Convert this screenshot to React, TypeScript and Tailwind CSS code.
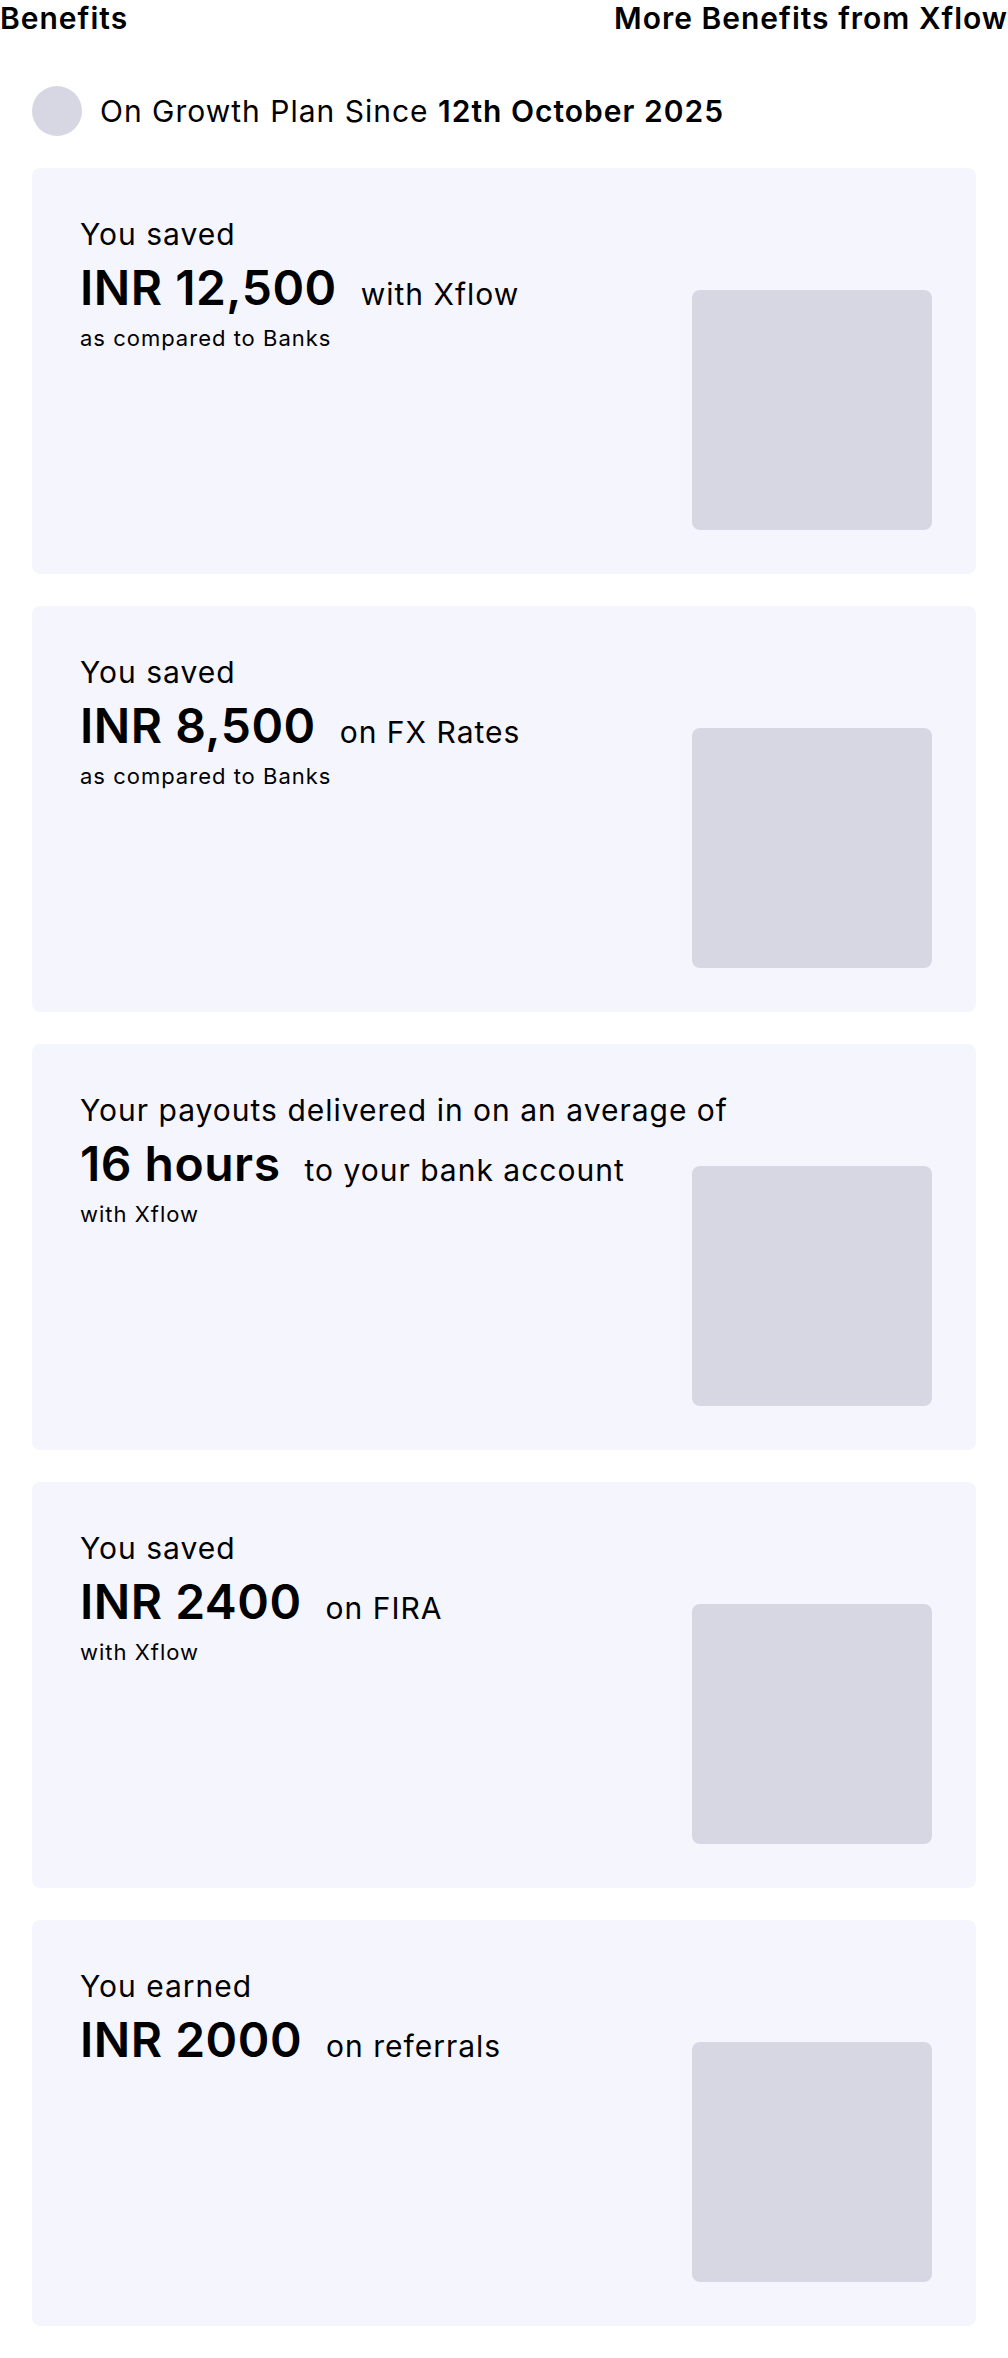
type Benefit = {
  lead: string;
  amount: string;
  suffix: string;
  note?: string;
};

const benefits: Benefit[] = [
  { lead: "You saved", amount: "INR 12,500", suffix: "with Xflow", note: "as compared to Banks" },
  { lead: "You saved", amount: "INR 8,500", suffix: "on FX Rates", note: "as compared to Banks" },
  {
    lead: "Your payouts delivered in on an average of",
    amount: "16 hours",
    suffix: "to your bank account",
    note: "with Xflow",
  },
  { lead: "You saved", amount: "INR 2400", suffix: "on FIRA", note: "with Xflow" },
  { lead: "You earned", amount: "INR 2000", suffix: "on referrals" },
];

function BenefitCard({ item }: { item: Benefit }) {
  return (
    <div className="grid h-[406px] rounded-lg bg-[#f5f5fe]">
      {/* copy */}
      <div className="col-start-1 row-start-1 self-start justify-self-start pl-12 pt-12">
        <p className="text-[30px] leading-9 tracking-[1px]">{item.lead}</p>
        <div className="mt-3 flex items-baseline gap-6">
          <span className="text-[48px] font-semibold leading-none tracking-[0.5px]">{item.amount}</span>
          <span className="text-[30px] leading-9 tracking-[1px]">{item.suffix}</span>
        </div>
        {item.note && <p className="mt-3 text-[22px] leading-7 tracking-[1px]">{item.note}</p>}
      </div>

      {/* illustration placeholder */}
      <div className="col-start-1 row-start-1 mb-11 mr-11 size-60 self-end justify-self-end rounded-lg bg-[#d6d7e3]" />
    </div>
  );
}

export default function App() {
  return (
    <div className="min-h-screen bg-white pb-8 font-['Inter',sans-serif] text-black">
      <header className="flex items-center justify-between text-[30px] font-semibold leading-9 tracking-[1px]">
        <p>Benefits</p>
        <p>More Benefits from Xflow</p>
      </header>

      <div className="mt-[50px] flex flex-col gap-8 px-8">
        <div className="flex items-center gap-[18px]">
          <div className="size-[50px] rounded-full bg-[#d6d7e3]" />
          <p className="text-[30px] leading-9 tracking-[1px]">
            On Growth Plan Since <span className="font-semibold">12th October 2025</span>
          </p>
        </div>

        {benefits.map((b) => (
          <BenefitCard key={b.amount} item={b} />
        ))}
      </div>
    </div>
  );
}
